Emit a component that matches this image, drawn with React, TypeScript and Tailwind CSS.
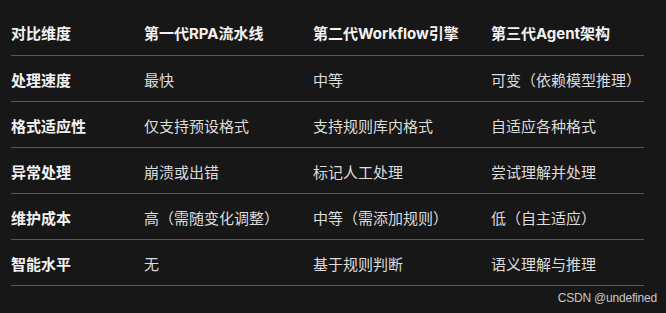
import React from "react";

const rows: string[][] = [
  ["处理速度", "最快", "中等", "可变（依赖模型推理）"],
  ["格式适应性", "仅支持预设格式", "支持规则库内格式", "自适应各种格式"],
  ["异常处理", "崩溃或出错", "标记人工处理", "尝试理解并处理"],
  ["维护成本", "高（需随变化调整）", "中等（需添加规则）", "低（自主适应）"],
  ["智能水平", "无", "基于规则判断", "语义理解与推理"],
];

const header = ["对比维度", "第一代RPA流水线", "第二代Workflow引擎", "第三代Agent架构"];

export default function App() {
  return (
    <div
      className="w-[666px] h-[313px] bg-[#171717] overflow-hidden relative"
      style={{ fontFamily: '"Inter", "Noto Sans CJK SC", sans-serif' }}
    >
      <div className="ml-[11px] mt-[10px] w-[633px]">
        <div className="grid grid-cols-[133px_169px_178px_153px] h-[46px] pt-[4px] items-center border-b border-[#585858] text-[15px] font-bold text-[#f2f2f2]">
          {header.map((h, i) => (
            <div key={i} className="whitespace-nowrap">{h}</div>
          ))}
        </div>
        {rows.map((r, ri) => (
          <div
            key={ri}
            className="grid grid-cols-[133px_169px_178px_153px] h-[46px] pt-[5px] items-center border-b border-[#585858] text-[15px]"
          >
            {r.map((c, ci) => (
              <div
                key={ci}
                className={
                  ci === 0
                    ? "whitespace-nowrap font-bold text-[#f2f2f2]"
                    : "whitespace-nowrap text-[#dcdcdc]"
                }
              >
                {c}
              </div>
            ))}
          </div>
        ))}
      </div>
      <div
        className="absolute right-[9px] top-[290px] text-[12px] leading-[16px] tracking-[-0.2px] text-[#c8c8c8]"
        style={{ fontFamily: '"Liberation Sans", sans-serif' }}
      >
        CSDN @undefined
      </div>
    </div>
  );
}
